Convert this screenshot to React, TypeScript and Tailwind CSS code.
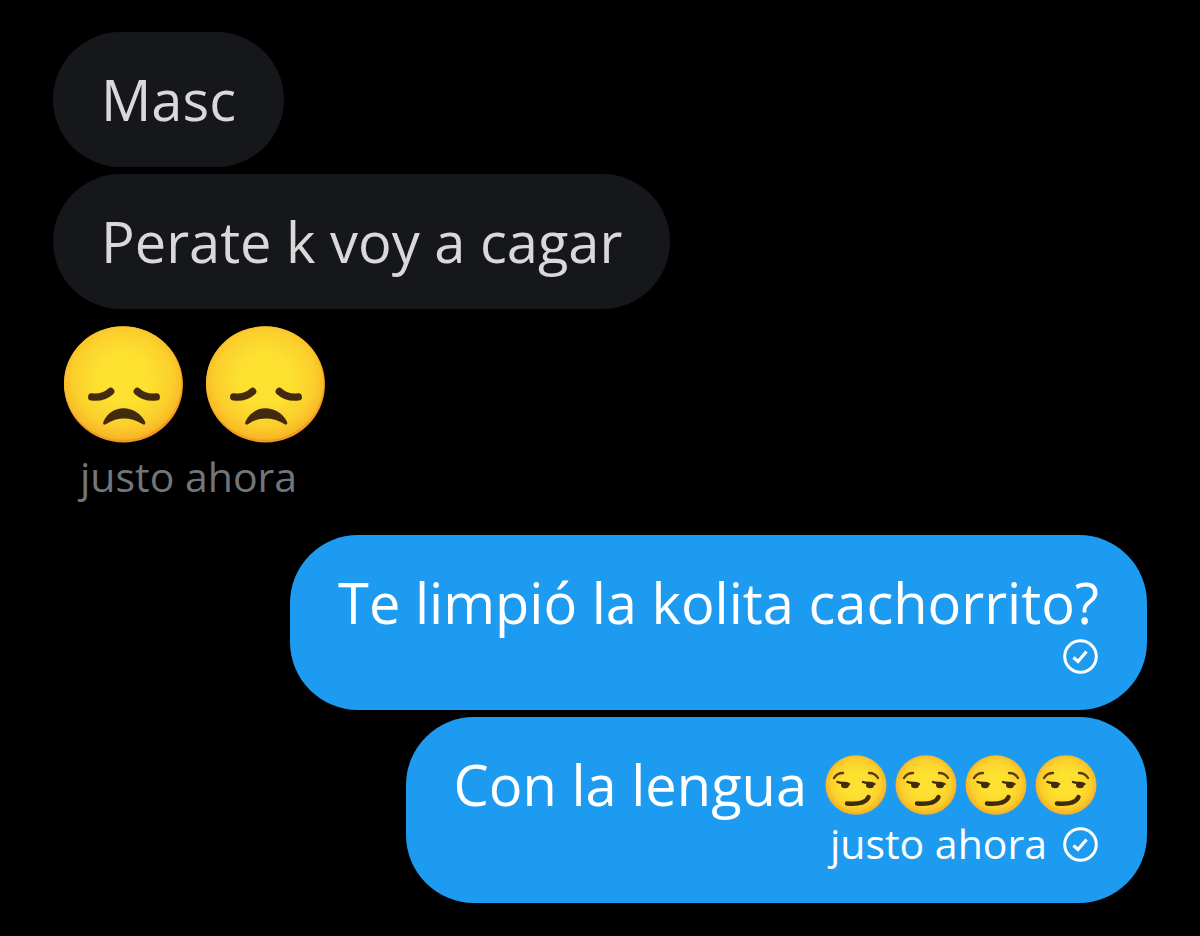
import type { ReactNode } from "react";

function SadFace() {
  return (
    <svg
      viewBox="0 0 120 118"
      className="h-[117px] w-[121px]"
      role="img"
      aria-label="Disappointed face"
    >
      <defs>
        <radialGradient id="sad-fill" cx="0.5" cy="0.46" r="0.56">
          <stop offset="0.4" stopColor="#fde030" />
          <stop offset="0.75" stopColor="#fbcf2c" />
          <stop offset="1" stopColor="#f7b026" />
        </radialGradient>
      </defs>
      <ellipse cx="60" cy="59" rx="60" ry="58.5" fill="#f29a1c" />
      <ellipse cx="59.3" cy="57.5" rx="59.3" ry="57.2" fill="url(#sad-fill)" />
      <g fill="none" stroke="#422b0d" strokeWidth="7.5" strokeLinecap="round">
        <path d="M28 71.5C36 72.5 42 70.5 47 66" />
        <path d="M93 71.5C85 72.5 79 70.5 74 66" />
      </g>
      <path
        d="M40 96C44 88 51 83 60 83C69 83 77 88 81.5 96C83 99 81 100.5 78.5 98.5C67 91.5 54 91.5 43 98.5C40.5 100.5 38.5 99 40 96Z"
        fill="#422b0d"
      />
    </svg>
  );
}

function SmirkFace() {
  return (
    <svg
      viewBox="0 0 62 60"
      className="h-[60px] w-[62px]"
      role="img"
      aria-label="Smirking face"
    >
      <defs>
        <radialGradient id="smirk-fill" cx="0.5" cy="0.48" r="0.54">
          <stop offset="0.4" stopColor="#fde030" />
          <stop offset="0.75" stopColor="#fbd02c" />
          <stop offset="1" stopColor="#f5a823" />
        </radialGradient>
      </defs>
      <ellipse cx="31" cy="30" rx="30.5" ry="29.8" fill="url(#smirk-fill)" />
      <g fill="none" stroke="#5c3b0c" strokeWidth="2.4" strokeLinecap="round">
        <path d="M9 23C11 19.5 14 18 18 18" />
        <path d="M44 18C48 18 51 19.5 53 23" />
      </g>
      <g fill="none" stroke="#422b0d" strokeWidth="2.4" strokeLinecap="round">
        <path d="M12.5 27C16 28.5 20 27.5 24 29" />
        <path d="M38 27C41.5 28.5 45.5 27.5 49.5 29" />
      </g>
      <ellipse cx="20" cy="30" rx="4" ry="3.2" fill="#422b0d" />
      <ellipse cx="45" cy="30" rx="4" ry="3.2" fill="#422b0d" />
      <path
        d="M22 48.5C28 49 33 49 37 47.5C40.5 46.3 42.5 44.5 43.5 42"
        fill="none"
        stroke="#422b0d"
        strokeWidth="4.5"
        strokeLinecap="round"
      />
    </svg>
  );
}

function SentIcon() {
  return (
    <svg
      viewBox="0 0 36 36"
      className="size-9"
      fill="none"
      stroke="currentColor"
      role="img"
      aria-label="Enviado"
    >
      <circle cx="17.5" cy="18.5" r="15.8" strokeWidth="3" />
      <path d="M10.5 19.5L15 23.5L23.5 13.5" strokeWidth="3.2" />
    </svg>
  );
}

function Bubble({ sent, children }: { sent?: boolean; children: ReactNode }) {
  return (
    <div
      className={
        sent
          ? "flex flex-col items-end rounded-[68px] bg-[#1d9bf0] px-12 pt-8 pb-9 text-white"
          : "rounded-[68px] bg-[#16171a] px-12 py-8 text-[#d9d9d9]"
      }
    >
      {children}
    </div>
  );
}

export default function App() {
  return (
    <main className="flex min-h-screen flex-col bg-black px-[53px] py-8 font-['Open_Sans',sans-serif] text-[56px] leading-[71px]">
      <div className="flex flex-col items-start gap-[7px]">
        <Bubble>
          <p>Masc</p>
        </Bubble>
        <Bubble>
          <p>Perate k voy a cagar</p>
        </Bubble>
        <div className="mt-2.5 ml-2.5 flex gap-[21px]">
          <SadFace />
          <SadFace />
        </div>
        <p className="ml-[27px] text-[41px] leading-[52px] text-[#71767b]">
          justo ahora
        </p>
      </div>

      <div className="mt-[33px] flex flex-col items-end gap-[7px]">
        <Bubble sent>
          <p>Te limpió la kolita cachorrito?</p>
          <SentIcon />
        </Bubble>
        <Bubble sent>
          <div className="flex items-center gap-[18px]">
            <p>Con la lengua</p>
            <div className="flex gap-2 pr-0.5">
              <SmirkFace />
              <SmirkFace />
              <SmirkFace />
              <SmirkFace />
            </div>
          </div>
          <div className="flex items-center gap-4">
            <p className="text-[41px] leading-[47px]">justo ahora</p>
            <SentIcon />
          </div>
        </Bubble>
      </div>
    </main>
  );
}
